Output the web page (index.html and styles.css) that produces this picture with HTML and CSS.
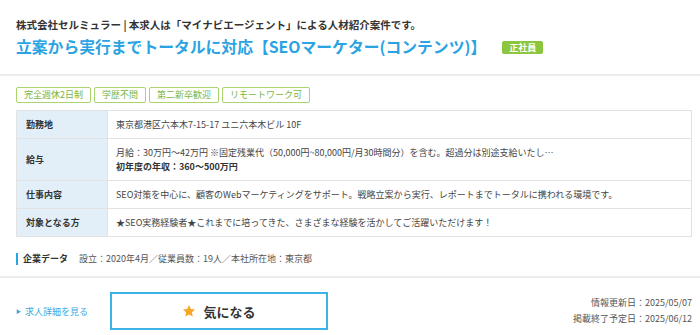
FILE: index.html
```html
<!DOCTYPE html>
<html lang="ja">

<head>
    <meta charset="UTF-8">
    <meta name="viewport" content="width=device-width, initial-scale=1.0">
    <title>求人情報</title>
    <link rel="stylesheet" href="styles.css">
</head>

<body>
    <!-- ヘッダー -->
    <div class="job-head">
        <p class="company">株式会社セルミュラー | 本求人は「マイナビエージェント」による人材紹介案件です。</p>
        <h2 class="job-title">立案から実行までトータルに対応【SEOマーケター(コンテンツ)】<span class="badge">正社員</span></h2>
    </div>

    <div class="job-body">
        <ul class="tags">
            <li>完全週休2日制</li>
            <li>学歴不問</li>
            <li>第二新卒歓迎</li>
            <li>リモートワーク可</li>
        </ul>

        <table class="info">
            <tr>
                <th>勤務地</th>
                <td>東京都港区六本木7-15-17 ユニ六本木ビル 10F</td>
            </tr>
            <tr>
                <th>給与</th>
                <td>月給：30万円～42万円 ※固定残業代（50,000円~80,000円/月30時間分）を含む。超過分は別途支給いたし…<br><strong>初年度の年収：360～500万円</strong></td>
            </tr>
            <tr>
                <th>仕事内容</th>
                <td>SEO対策を中心に、顧客のWebマーケティングをサポート。戦略立案から実行、レポートまでトータルに携われる環境です。</td>
            </tr>
            <tr>
                <th>対象となる方</th>
                <td>★SEO実務経験者★これまでに培ってきた、さまざまな経験を活かしてご活躍いただけます！</td>
            </tr>
        </table>

        <p class="corp"><span class="corp-label">企業データ</span>設立：2020年4月／従業員数：19人／本社所在地：東京都</p>
    </div>

    <!-- フッター -->
    <div class="job-foot">
        <a href="#" class="detail-link">求人詳細を見る</a>
        <button class="fav-btn">
            <svg width="14" height="14" viewBox="0 0 24 24"><path d="M12 1.8l3.1 6.6 7.2.9-5.3 5 1.4 7.1L12 17.9l-6.4 3.5 1.4-7.1-5.3-5 7.2-.9z" fill="#f6a623"/></svg>
            気になる
        </button>
        <div class="dates">
            <p>情報更新日：2025/05/07</p>
            <p>掲載終了予定日：2025/06/12</p>
        </div>
    </div>
</body>

</html>
```

FILE: styles.css
```css
/* 全体 */
body {
    margin: 0;
    background: #fff;
    color: #444;
    font-family: "Noto Sans CJK JP", "Noto Sans", sans-serif;
}

p {
    margin: 0;
}

/* ヘッダー */
.job-head {
    padding: 16px 8px 16px 16px;
    border-bottom: 2px solid #ececec;
}

.company {
    font-size: 10.5px;
    line-height: 18px;
    font-weight: bold;
    color: #333;
}

.job-title {
    margin: 2px 0 0;
    font-size: 15.8px;
    line-height: 22px;
    font-weight: bold;
    color: #2ba3e3;
    display: flex;
    align-items: center;
}

.badge {
    margin-left: 16px;
    background: #8cc63e;
    color: #fff;
    font-size: 9px;
    line-height: 13px;
    padding: 0 7px;
    border-radius: 2px;
    font-weight: bold;
}

/* 本文 */
.job-body {
    padding: 0 8px 0 16px;
}

.tags {
    list-style: none;
    margin: 11px 0 7px;
    padding: 0;
    display: flex;
    gap: 3px;
}

.tags li {
    border: 1px solid #a9d46e;
    border-radius: 2px;
    color: #79b640;
    font-size: 9px;
    line-height: 14px;
    padding: 0 7px;
}

.info {
    width: 100%;
    border-collapse: collapse;
    font-size: 9px;
    line-height: 14px;
}

.info th,
.info td {
    border: 1px solid #e2e2e2;
    padding: 6.5px 8px;
    text-align: left;
    vertical-align: middle;
}

.info th {
    width: 73px;
    background: #e3eff8;
    color: #333;
    padding-left: 9px;
}

.info td {
    color: #444;
}

.info strong {
    color: #333;
}

.corp {
    margin-top: 14px;
    padding-bottom: 9px;
    font-size: 9px;
    line-height: 16px;
    color: #555;
}

.corp-label {
    display: inline-block;
    border-left: 2px solid #2ba3e3;
    padding-left: 5px;
    margin-right: 11px;
    line-height: 12px;
    font-weight: bold;
    color: #333;
}

/* フッター */
.job-foot {
    border-top: 2px solid #ececec;
    padding: 14px 8px 0 16px;
    display: flex;
    align-items: center;
}

.detail-link {
    width: 94px;
    font-size: 9px;
    color: #3aa8e2;
    text-decoration: none;
}

.detail-link::before {
    content: "▶";
    font-size: 5px;
    margin-right: 4px;
    vertical-align: 2px;
}

.fav-btn {
    width: 218px;
    height: 38px;
    background: #fff;
    border: 2px solid #3cb2e9;
    font-family: inherit;
    font-size: 13px;
    font-weight: bold;
    color: #333;
    display: flex;
    align-items: center;
    justify-content: center;
    gap: 7px;
}

.dates {
    margin-left: auto;
    text-align: right;
    font-size: 9px;
    line-height: 16px;
    color: #555;
}
```
